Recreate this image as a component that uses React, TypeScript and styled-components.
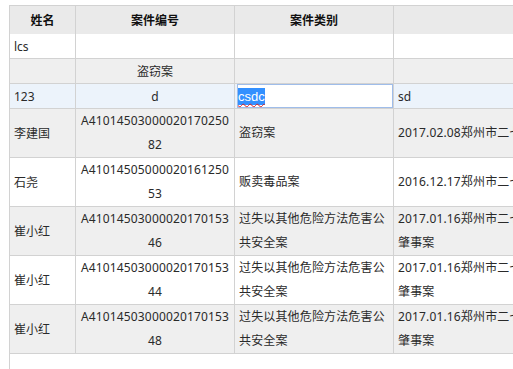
import React from "react";
import styled, { createGlobalStyle } from "styled-components";

const Global = createGlobalStyle`
  html, body {
    margin: 0;
    padding: 0;
    background: #ffffff;
  }
  body {
    font-family: "Noto Sans", "Noto Sans CJK SC", sans-serif;
    font-size: 12px;
    color: #2a2a2a;
  }
`;

const Page = styled.div`
  padding: 5px 0 0 9px;
  height: 100vh;
  box-sizing: border-box;
  overflow: hidden;
`;

const Sheet = styled.div`
  height: 100%;
  border-left: 1px solid #d2d2d2;
  border-top: 1px solid #d2d2d2;
  overflow: hidden;
`;

const COLUMNS = "66px 159px 159px 420px";

type Tone = "head" | "plain" | "stripe" | "hover";

const toneBg: Record<Tone, string> = {
  head: "#eaeaea",
  plain: "#ffffff",
  stripe: "#efefef",
  hover: "#ecf3fb",
};

const Row = styled.div<{ $tone: Tone; $tall?: boolean }>`
  display: grid;
  grid-template-columns: ${COLUMNS};
  width: max-content;
  background: ${(p) => toneBg[p.$tone]};
  height: ${(p) => (p.$tone === "head" ? 28 : p.$tall ? 49 : 25)}px;
  box-sizing: border-box;
  border-bottom: ${(p) => (p.$tone === "head" ? "none" : "1px solid #d2d2d2")};
`;

const Cell = styled.div<{ $center?: boolean; $head?: boolean }>`
  box-sizing: border-box;
  border-right: 1px solid #d2d2d2;
  padding: 0 4px;
  display: flex;
  align-items: center;
  justify-content: ${(p) => (p.$center ? "center" : "flex-start")};
  text-align: ${(p) => (p.$center ? "center" : "left")};
  font-weight: ${(p) => (p.$head ? 700 : 400)};
  color: ${(p) => (p.$head ? "#111111" : "#2a2a2a")};
  white-space: nowrap;
  overflow: hidden;
  min-width: 0;
`;

const Lines = styled.div`
  line-height: 24px;
  letter-spacing: 0.15px;
`;

const EditCell = styled.div`
  box-sizing: border-box;
  border-right: 1px solid #d2d2d2;
  padding: 0 0 0 2px;
  display: flex;
  align-items: stretch;
`;

const Editor = styled.div`
  flex: 1;
  box-sizing: border-box;
  border: 1px solid #9fbdea;
  background: #ffffff;
  display: flex;
  align-items: center;
  padding: 0;
  font-family: "Liberation Sans", "Noto Sans", sans-serif;
  font-size: 13px;
`;

const Selected = styled.span`
  background: #3390ff;
  color: #ffffff;
  text-decoration: underline wavy #e02020;
  text-decoration-thickness: 1px;
  text-underline-offset: 2px;
  padding: 1px 0;
`;

type CaseRecord = {
  tone: Tone;
  name: string;
  code: string[];
  kind: string[];
  summary: string[];
};

const records: CaseRecord[] = [
  {
    tone: "stripe",
    name: "李建国",
    code: ["A41014503000020170250", "82"],
    kind: ["盗窃案"],
    summary: ["2017.02.08郑州市二七区大学路某小区入室盗窃案"],
  },
  {
    tone: "plain",
    name: "石尧",
    code: ["A41014505000020161250", "53"],
    kind: ["贩卖毒品案"],
    summary: ["2016.12.17郑州市二七区贩卖毒品案"],
  },
  {
    tone: "stripe",
    name: "崔小红",
    code: ["A41014503000020170153", "46"],
    kind: ["过失以其他危险方法危害公", "共安全案"],
    summary: ["2017.01.16郑州市二七区大学路与航海路口交通", "肇事案"],
  },
  {
    tone: "plain",
    name: "崔小红",
    code: ["A41014503000020170153", "44"],
    kind: ["过失以其他危险方法危害公", "共安全案"],
    summary: ["2017.01.16郑州市二七区大学路与航海路口交通", "肇事案"],
  },
  {
    tone: "stripe",
    name: "崔小红",
    code: ["A41014503000020170153", "48"],
    kind: ["过失以其他危险方法危害公", "共安全案"],
    summary: ["2017.01.16郑州市二七区大学路与航海路口交通", "肇事案"],
  },
];

const Multi = ({ lines }: { lines: string[] }) => (
  <Lines>
    {lines.map((l, i) => (
      <div key={i}>{l}</div>
    ))}
  </Lines>
);

export default function App() {
  return (
    <>
      <Global />
      <Page>
        <Sheet>
          <Row $tone="head">
            <Cell $head $center>姓名</Cell>
            <Cell $head $center>案件编号</Cell>
            <Cell $head $center>案件类别</Cell>
            <Cell $head />
          </Row>
          <Row $tone="plain">
            <Cell>lcs</Cell>
            <Cell $center />
            <Cell />
            <Cell />
          </Row>
          <Row $tone="stripe">
            <Cell />
            <Cell $center>盗窃案</Cell>
            <Cell />
            <Cell />
          </Row>
          <Row $tone="hover">
            <Cell>123</Cell>
            <Cell $center>d</Cell>
            <EditCell>
              <Editor>
                <Selected>csdc</Selected>
              </Editor>
            </EditCell>
            <Cell>sd</Cell>
          </Row>
          {records.map((r, i) => (
            <Row key={i} $tone={r.tone} $tall>
              <Cell>{r.name}</Cell>
              <Cell $center>
                <Multi lines={r.code} />
              </Cell>
              <Cell>
                <Multi lines={r.kind} />
              </Cell>
              <Cell>
                <Multi lines={r.summary} />
              </Cell>
            </Row>
          ))}
        </Sheet>
      </Page>
    </>
  );
}
